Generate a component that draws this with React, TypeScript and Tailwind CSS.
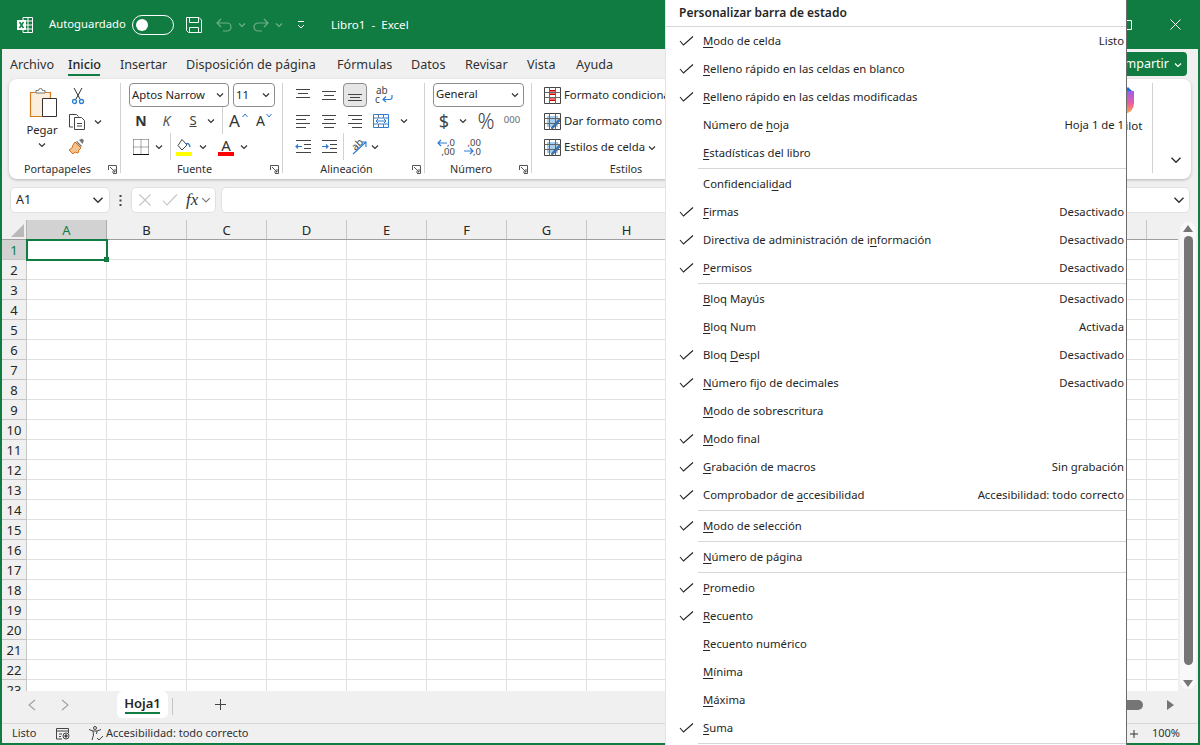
import React from "react";

const Chev = ({ s = 8, c = "#333", w = 1.2 }: { s?: number; c?: string; w?: number }) => (
  <svg width={s} height={s} viewBox="0 0 8 8"><path d="M1 2.5 4 5.5 7 2.5" fill="none" stroke={c} strokeWidth={w} /></svg>
);

const Lines = ({ y, x }: { y: number[]; x: [number, number][] }) => (
  <svg width="16" height="16" viewBox="0 0 16 16">
    {y.map((v, i) => <path key={i} d={`M${x[i][0]} ${v}.5H${x[i][1]}`} stroke="#444" strokeWidth="1" />)}
  </svg>
);

const Launcher = () => (
  <svg width="9" height="9" viewBox="0 0 9 9" fill="none" stroke="#555"><path d="M.5 5V.5H8.5V8.5H5" /><path d="M2 2 7 7M7 4V7H4" /></svg>
);

const Sep = () => <div className="w-px h-[27px] bg-[#d2d2d2]" />;
const Divider = () => <div className="w-px h-[90px] shrink-0 bg-[#d2d2d2]" />;

const GroupFooter = ({ label, launcher = true }: { label: string; launcher?: boolean }) => (
  <div className={launcher ? "h-[20px] shrink-0 flex items-center relative text-[10.8px] text-[#303030] pr-[14px]" : "h-[20px] shrink-0 flex items-center relative text-[10.8px] text-[#303030]"}>
    <span className="flex-1 text-center">{label}</span>
    {launcher && <span className="absolute right-[3px] top-[6px] flex"><Launcher /></span>}
  </div>
);

const Combo = ({ text, className }: { text: string; className: string }) => (
  <div className={"h-[24px] rounded-[4px] border border-[#8c8c8c] bg-white flex items-center justify-between pl-[2px] pr-[4px] text-[#262626] " + className}>
    <span>{text}</span><Chev />
  </div>
);

const PasteIcon = () => (
  <svg width="30" height="32" viewBox="0 0 30 32">
    <path d="M1.5 5.5h20v24h-20z" fill="#fbeedd" stroke="#d57a1e" strokeWidth="1.2" />
    <path d="M7 6V3.5h2.5a2 2 0 0 1 4 0H16V6z" fill="#fff" stroke="#777" />
    <path d="M13.5 11.5h14v18h-14z" fill="#fff" stroke="#333" />
  </svg>
);
const Scissors = () => (
  <svg width="14" height="18" viewBox="0 0 14 18" fill="none" stroke="#333"><path d="M3 1 9 12M11 1 5 12" /><circle cx="3.5" cy="14.5" r="2" stroke="#2b7cd3" strokeWidth="1.3" /><circle cx="10.5" cy="14.5" r="2" stroke="#2b7cd3" strokeWidth="1.3" /></svg>
);
const CopyIcon = () => (
  <svg width="18" height="17" viewBox="0 0 18 17" fill="none" stroke="#444"><path d="M1.5 14V1.5h7l2 2" /><path d="M1.5 14H5" /><path d="M6.5 4.5h7l3 3v9h-10z" fill="#fff" /><path d="M9 10.5h5M9 13h5" /></svg>
);
const Brush = () => (
  <svg width="17" height="17" viewBox="0 0 17 17"><path d="M9 3l5 5-1 1-5-5zM11 2l3-1.5 2 2L14.500 6z" fill="#777" /><path d="M7 4l6 6-2 2-1 3-3-1-2 2-1-1-3-3 3-2 1-3z" fill="#f4c28b" stroke="#d9701f" /></svg>
);
const BorderIcon = () => (
  <svg width="16" height="16" viewBox="0 0 16 16" fill="none" stroke="#555" strokeDasharray="1 1"><path d="M.5.5h15M.5.5v15M15.500.5v15M8 .5v15M.5 8h15" /><path d="M0 15.500h16" stroke="#111" strokeDasharray="none" strokeWidth="1.2" /></svg>
);
const FillIcon = () => (
  <svg width="16" height="18" viewBox="0 0 16 18"><path d="M6 1.500 11 7l-5 5-4-4.500z" fill="#fff" stroke="#444" /><path d="M10 6q3-2 4 3" fill="none" stroke="#2b7cd3" strokeWidth="1.5" /><path d="M0 14h16v4H0z" fill="#ffff00" /></svg>
);
const FontColor = () => (
  <span className="relative w-[16px] h-[18px] flex flex-col items-center justify-between">
    <span className="text-[15px] leading-[14px] text-[#333]">A</span>
    <span className="w-[16px] h-[4px] bg-[#ff0000]" />
  </span>
);
const WrapIcon = () => (
  <span className="relative w-[17px] h-[18px] block text-[10px] leading-[9px] text-[#444]">
    <span className="block pl-[1px]">ab</span>
    <span className="block">c</span>
    <svg className="absolute left-[6px] top-[8px]" width="12" height="9" viewBox="0 0 12 9" fill="none" stroke="#2b7cd3" strokeWidth="1.2"><path d="M11 1v2.500a2 2 0 0 1-2 2H2M5 2.500 2 5.500 5 8" /></svg>
  </span>
);
const MergeIcon = () => (
  <svg width="16" height="16" viewBox="0 0 16 16" fill="none"><path d="M.5 1.500h15v13H.5z" stroke="#2b7cd3" /><path d="M.5 5h15M.5 11h15" stroke="#2b7cd3" /><path d="M5.500 1.500V5M10.500 1.500V5M5.500 11v3.500M10.500 11v3.500" stroke="#777" /><path d="M3 8h10M5 6l-2 2 2 2M11 6l2 2-2 2" stroke="#2b7cd3" /></svg>
);
const Indent = ({ flip = false }: { flip?: boolean }) => (
  <svg width="16" height="14" viewBox="0 0 16 14" fill="none"><path d="M1 .5h15M9 4.500h7M9 8.500h7M1 12.500h15" stroke="#444" /><path d={flip ? "M1 6.500h6M5 4.500 7 6.500 5 8.500" : "M1 6.500h6M3 4.500 1 6.500 3 8.500"} stroke="#2b7cd3" strokeWidth="1.2" /></svg>
);
const Orient = () => (
  <span className="relative w-[18px] h-[18px] block">
    <span className="absolute left-[1px] top-[1px] text-[10px] leading-[10px] text-[#444] rotate-[-45deg]">ab</span>
    <svg className="absolute left-0 top-0" width="18" height="18" viewBox="0 0 18 18" fill="none" stroke="#2b7cd3" strokeWidth="1.1"><path d="M3 16 16 4M11 4h5v5" /></svg>
  </span>
);
const DecDown = ({ flip = false }: { flip?: boolean }) => (
  <span className="relative w-[18px] h-[18px] block text-[9.5px] leading-[9px] text-[#444] text-right">
    <span className="block">{flip ? ",00" : ",0"}</span>
    <span className="block">{flip ? ",0" : ",00"}</span>
    <svg className="absolute left-0" style={{ top: flip ? 9 : 1 }} width="11" height="8" viewBox="0 0 11 8" fill="none" stroke="#2b7cd3" strokeWidth="1.2"><path d={flip ? "M1 4h9M7 1l3 3-3 3" : "M1 4h9M4 1 1 4l3 3"} /></svg>
  </span>
);
const TableIcon = ({ v }: { v: number }) => (
  <svg width="17" height="17" viewBox="0 0 17 17" fill="none">
    <path d="M.5.5h16v16H.5z" stroke="#444" fill="#fff" />
    {v === 0 ? <path d="M5.500 3.500h6v4h-6zM5.500 10.500h6v3h-6z" fill="#f26d6d" stroke="#c00000" /> : <path d="M3 3h11v11H3z" fill="#a7ccec" />}
    <path d="M.5 5.500h16M.5 10.500h16M5.500.5v16M11.500.5v16" stroke="#666" />
    {v !== 0 && <path d="M7 15l8-9 1.500 1.500-8 8.500z" fill="#2b7cd3" stroke="#444" strokeWidth=".6" />}
  </svg>
);

const MENU: (string | null)[][] = [
  ["1", "M_odo de celda", "Listo"],
  ["1", "R_elleno rápido en las celdas en blanco", ""],
  ["1", "R_elleno rápido en las celdas modificadas", ""],
  ["", "Número de h_oja", "Hoja 1 de 1"],
  ["", "E_stadísticas del libro", ""],
  [null],
  ["", "Confidencialid_ad", ""],
  ["1", "F_irmas", "Desactivado"],
  ["1", "Directiva de administración de in_formación", "Desactivado"],
  ["1", "P_ermisos", "Desactivado"],
  [null],
  ["", "B_loq Mayús", "Desactivado"],
  ["", "B_loq Num", "Activada"],
  ["1", "Bloq D_espl", "Desactivado"],
  ["1", "N_úmero fijo de decimales", "Desactivado"],
  ["", "M_odo de sobrescritura", ""],
  ["1", "M_odo final", ""],
  ["1", "G_rabación de macros", "Sin grabación"],
  ["1", "Comprobador de a_ccesibilidad", "Accesibilidad: todo correcto"],
  [null],
  ["1", "M_odo de selección", ""],
  [null],
  ["1", "N_úmero de página", ""],
  [null],
  ["1", "P_romedio", ""],
  ["1", "R_ecuento", ""],
  ["", "R_ecuento numérico", ""],
  ["", "M_ínima", ""],
  ["", "M_áxima", ""],
  ["1", "S_uma", ""],
  [null],
];

const Label = ({ t }: { t: string }) => {
  const i = t.indexOf("_");
  const a = t.slice(0, i - 1);
  const b = t.slice(i - 1, i);
  const c = t.slice(i + 1);
  return <span>{a}<span className="underline underline-offset-2">{b}</span>{c}</span>;
};

const COLS = ["A", "B", "C", "D", "E", "F", "G", "H", "I", "J", "K", "L", "M", "N", "O"];
const ROWS = Array.from({ length: 23 }, (_, i) => i + 1);

export default function App() {
  return (
    <div className="w-[1200px] h-[745px] relative overflow-hidden bg-[#107c41] font-['Noto_Sans',sans-serif] text-[11.3px] text-[#262626] flex flex-col">
      {/* title bar */}
      <div className="h-[49px] shrink-0 flex items-center pl-[17px] text-white">
        <svg width="16" height="16" viewBox="0 0 16 16" fill="none" stroke="#fff"><path d="M6 .5h9.500v15H6z" /><path d="M6 4h9.500M6 8h9.500M6 12h9.500M11 .5v15" /><path d="M0 3h9v10H0z" fill="#fff" stroke="none" /><path d="M2.500 5 6.500 11M6.500 5 2.500 11" stroke="#107c41" strokeWidth="1.400" /></svg>
        <span className="ml-[16px] w-[83px] whitespace-nowrap">Autoguardado</span>
        <div className="w-[42px] h-[20px] rounded-full border border-white flex items-center pl-[3px]"><span className="w-[12px] h-[12px] rounded-full bg-white" /></div>
        <svg className="ml-[12px]" width="16" height="16" viewBox="0 0 16 16" fill="none" stroke="#fff" opacity=".95"><path d="M.5.500h12.500l2.500 2.500v12.500H2.500L.5 13.500z" /><path d="M3.500.5v5h9v-5M3.500 15.500v-5h9v5" /></svg>
        <svg className="ml-[14px]" width="16" height="16" viewBox="0 0 16 16" fill="none" stroke="#6fae8b" strokeWidth="1.200"><path d="M1 6h10a4 4 0 0 1 0 8H7M5 2 1 6l4 4" /></svg>
        <span className="ml-[6px] flex"><Chev c="#6fae8b" /></span>
        <svg className="ml-[7px]" width="16" height="16" viewBox="0 0 16 16" fill="none" stroke="#6fae8b" strokeWidth="1.200"><path d="M15 6H5a4 4 0 0 0 0 8h4M11 2l4 4-4 4" /></svg>
        <span className="ml-[6px] flex"><Chev c="#6fae8b" /></span>
        <svg className="ml-[14px]" width="8" height="8" viewBox="0 0 8 8" fill="none" stroke="#fff"><path d="M1 .5h6" /><path d="M1 4 4 7 7 4" /></svg>
        <span className="ml-[26px] text-[11.6px] whitespace-pre">Libro1  -  Excel</span>
        <div className="flex-1" />
        <svg width="10" height="10" viewBox="0 0 10 10" fill="none" stroke="#fff" className="mr-[38px]"><path d="M.5.5h9v9h-9z" /></svg>
        <svg width="11" height="11" viewBox="0 0 11 11" fill="none" stroke="#fff" className="mr-[19px]"><path d="M.5.5l10 10M10.500.5l-10 10" /></svg>
      </div>

      {/* window body */}
      <div className="flex-1 ml-[2px] mr-[2px] mb-[2px] bg-[#f0f0f0] flex flex-col min-h-0">
        {/* tabs */}
        <div className="h-[30px] shrink-0 flex items-start pt-[7px] pl-[8px] text-[12.6px] text-[#303030] relative">
          <span className="w-[58px]">Archivo</span>
          <span className="w-[52px] relative font-medium text-[#1f1f1f]">Inicio<span className="absolute left-0 top-[18px] w-[32px] h-[2px] bg-[#107c41]" /></span>
          <span className="w-[66px]">Insertar</span>
          <span className="w-[151px]">Disposición de página</span>
          <span className="w-[74px]">Fórmulas</span>
          <span className="w-[54px]">Datos</span>
          <span className="w-[62px]">Revisar</span>
          <span className="w-[49px]">Vista</span>
          <span>Ayuda</span>
          <div className="absolute right-[11px] top-[3px] h-[24px] w-[100px] bg-[#107c41] rounded-[4px] text-white flex items-center justify-end pr-[5px] gap-[5px] pt-[1px]">
            <span className="text-[12.5px]">Compartir</span><Chev c="#fff" />
          </div>
        </div>

        {/* ribbon */}
        <div className="h-[100px] shrink-0 mx-[7px] bg-white rounded-[8px] shadow-[0_1px_3px_rgba(0,0,0,0.25)] flex items-start pt-[4px] overflow-hidden">
          {/* Portapapeles */}
          <div className="w-[111px] shrink-0 flex flex-col">
            <div className="h-[76px] flex">
              <div className="w-[58px] flex flex-col items-center pl-[8px] pt-[4px]">
                <span className="flex ml-[4px]"><PasteIcon /></span>
                <span className="mt-[2px] leading-[18px]">Pegar</span>
                <span className="flex mt-[2px]"><Chev /></span>
              </div>
              <div className="flex flex-col gap-[8px] pl-[1px] pt-[4px]">
                <span className="pl-[3px] flex"><Scissors /></span>
                <span className="flex items-center gap-[8px]"><CopyIcon /><Chev /></span>
                <span className="flex"><Brush /></span>
              </div>
            </div>
            <GroupFooter label="Portapapeles" />
          </div>
          <Divider />
          {/* Fuente */}
          <div className="w-[161px] shrink-0 flex flex-col">
            <div className="h-[76px] flex flex-col pl-[8px]">
              <div className="flex gap-[4px]">
                <Combo text="Aptos Narrow" className="w-[100px]" />
                <Combo text="11" className="w-[42px]" />
              </div>
              <div className="h-[28px] flex items-center">
                <span className="w-[24px] text-center font-bold text-[14px] text-[#333]">N</span>
                <span className="w-[27px] text-center italic text-[14px] text-[#555]">K</span>
                <span className="w-[26px] text-center underline text-[13px] text-[#444]">S</span>
                <span className="w-[16px] flex pl-[1px]"><Chev /></span>
                <Sep />
                <span className="w-[26px] text-center text-[17px] leading-[22px] text-[#333] relative pr-[3px]">A<span className="absolute top-[3px] right-[1px] flex"><svg width="6" height="5" viewBox="0 0 6 5" fill="none" stroke="#2b7cd3"><path d="M.5 4 3 1 5.500 4" /></svg></span></span>
                <span className="w-[26px] text-center text-[14px] leading-[22px] text-[#333] relative pr-[3px]">A<span className="absolute top-[3px] right-[3px] flex"><svg width="6" height="5" viewBox="0 0 6 5" fill="none" stroke="#2b7cd3"><path d="M.5 1 3 4 5.500 1" /></svg></span></span>
              </div>
              <div className="h-[25px] flex items-center">
                <span className="w-[23px] flex justify-center"><BorderIcon /></span>
                <span className="w-[14px] flex pl-[3px]"><Chev /></span>
                <span className="w-[4px]" /><Sep />
                <span className="w-[26px] flex justify-center"><FillIcon /></span>
                <span className="w-[14px] flex pl-[2px]"><Chev /></span>
                <span className="w-[23px] flex justify-end"><FontColor /></span>
                <span className="w-[14px] flex justify-end"><Chev /></span>
              </div>
            </div>
            <GroupFooter label="Fuente" />
          </div>
          <Divider />
          {/* Alineación */}
          <div className="w-[141px] shrink-0 flex flex-col">
            <div className="h-[76px] flex flex-col pl-[12px]">
              <div className="h-[24px] flex items-center">
                <span className="w-[26px] flex"><Lines y={[2, 6, 10]} x={[[1, 15], [3, 13], [1, 15]]} /></span>
                <span className="w-[22px] flex"><Lines y={[4, 8, 12]} x={[[1, 15], [3, 13], [1, 15]]} /></span>
                <span className="w-[24px] h-[24px] rounded-[4px] border border-[#8c8c8c] bg-[#e6e6e6] flex items-center justify-center"><Lines y={[7, 10, 13]} x={[[1, 15], [3, 13], [1, 15]]} /></span>
                <span className="ml-[8px] flex"><WrapIcon /></span>
              </div>
              <div className="h-[28px] flex items-center">
                <span className="w-[26px] flex"><Lines y={[2, 6, 10, 14]} x={[[1, 15], [1, 11], [1, 15], [1, 11]]} /></span>
                <span className="w-[26px] flex"><Lines y={[2, 6, 10, 14]} x={[[1, 15], [3, 13], [1, 15], [3, 13]]} /></span>
                <span className="w-[26px] flex"><Lines y={[2, 6, 10, 14]} x={[[1, 15], [5, 15], [1, 15], [5, 15]]} /></span>
                <span className="w-[27px] flex"><MergeIcon /></span>
                <span className="flex"><Chev /></span>
              </div>
              <div className="h-[25px] flex items-center">
                <span className="w-[26px] flex"><Indent /></span>
                <span className="w-[22px] flex"><Indent flip /></span>
                <Sep />
                <span className="w-[6px]" />
                <span className="w-[21px] flex"><Orient /></span>
                <span className="flex"><Chev /></span>
              </div>
            </div>
            <GroupFooter label="Alineación" />
          </div>
          <Divider />
          {/* Número */}
          <div className="w-[106px] shrink-0 flex flex-col">
            <div className="h-[76px] flex flex-col pl-[8px]">
              <Combo text="General" className="w-[91px]" />
              <div className="h-[28px] flex items-center text-[#444]">
                <span className="w-[22px] text-center text-[18px] leading-[20px]">$</span>
                <span className="w-[16px] flex justify-center"><Chev /></span>
                <span className="w-[30px] text-center text-[21px] font-light leading-[20px]">%</span>
                <span className="w-[22px] text-center text-[9.5px] text-[#666]">000</span>
              </div>
              <div className="h-[25px] flex items-center gap-[8px] pl-[4px]">
                <DecDown /><DecDown flip />
              </div>
            </div>
            <GroupFooter label="Número" />
          </div>
          <Divider />
          {/* Estilos */}
          <div className="w-[188px] shrink-0 flex flex-col">
            <div className="h-[76px] flex flex-col pt-[4px] pl-[12px] gap-[9px] whitespace-nowrap">
              <div className="h-[17px] flex items-center gap-[3px]"><TableIcon v={0} /><span>Formato condicional</span></div>
              <div className="h-[17px] flex items-center gap-[3px]"><TableIcon v={1} /><span>Dar formato como tabla</span></div>
              <div className="h-[17px] flex items-center gap-[3px]"><TableIcon v={2} /><span>Estilos de celda</span><Chev /></div>
            </div>
            <GroupFooter label="Estilos" launcher={false} />
          </div>
          <div className="flex-1" />
          {/* Copilot */}
          <div className="w-[56px] shrink-0 flex flex-col items-center pt-[4px] pr-[2px]">
            <svg width="26" height="28" viewBox="0 0 26 28">
              <defs><linearGradient id="cp" x1="0" y1="0" x2="0" y2="1"><stop offset="0" stopColor="#9a5cf0" /><stop offset=".55" stopColor="#e8609c" /><stop offset="1" stopColor="#fbb040" /></linearGradient></defs>
              <path d="M2 4h22v12q0 10-11 11Q2 26 2 16z" fill="url(#cp)" />
              <path d="M14 4 18 0l4 4z" fill="#1c6fd6" />
            </svg>
            <span className="text-[11.6px] mt-[2px]">Copilot</span>
          </div>
          <Divider />
          <div className="w-[38px] h-[90px] shrink-0 flex items-end justify-end pb-[7px] pr-[9px]"><Chev s={12} w={1} /></div>
        </div>

        {/* formula bar */}
        <div className="h-[26px] shrink-0 mt-[8px] mx-[8px] flex items-center">
          <div className="w-[100px] h-[26px] bg-white rounded-[5px] border border-[#e0e0e0] flex items-center justify-between pl-[5px] pr-[5px] text-[12.5px]"><span>A1</span><Chev s={12} w={1} /></div>
          <div className="w-[21px] flex justify-center">
            <svg width="3" height="11" viewBox="0 0 3 11" fill="#444"><rect x="0.500" y="0" width="2" height="2" /><rect x="0.500" y="4.500" width="2" height="2" /><rect x="0.500" y="9" width="2" height="2" /></svg>
          </div>
          <div className="w-[85px] h-[26px] bg-white rounded-[5px] border border-[#e0e0e0] flex items-center pl-[7px]">
            <svg width="12" height="12" viewBox="0 0 12 12" fill="none" stroke="#c4c4c4" strokeWidth="1.100"><path d="M.5.5l11 11M11.500.5l-11 11" /></svg>
            <svg className="ml-[11px]" width="16" height="12" viewBox="0 0 16 12" fill="none" stroke="#c4c4c4" strokeWidth="1.100"><path d="M1 6.500 5 11 15 .5" /></svg>
            <span className="ml-[8px] font-['Liberation_Serif',serif] italic text-[17px] leading-[20px] text-[#333]">fx</span>
            <span className="ml-[3px] flex"><Chev s={10} c="#777" w={.9} /></span>
          </div>
          <div className="w-[5px]" />
          <div className="flex-1 h-[26px] bg-white rounded-[5px] border border-[#e0e0e0] flex items-center justify-end pr-[4px]"><Chev s={12} w={1} /></div>
        </div>

        {/* sheet area */}
        <div className="flex-1 min-h-0 mt-[7px] flex">
          <div className="w-[1176px] shrink-0 flex flex-col relative overflow-hidden bg-white">
            <div className="h-[20px] shrink-0 flex bg-[#f0f0f0] border-b border-[#9e9e9e]">
              <div className="w-[25px] shrink-0 border-r border-[#b5b5b5] flex items-end justify-end pr-[2px] pb-[2px]">
                <svg width="13" height="13" viewBox="0 0 13 13"><path d="M13 0v13H0z" fill="#b9b9b9" /></svg>
              </div>
              {COLS.map((c, i) => (
                <div key={c} className={i === 0
                  ? "w-[80px] shrink-0 bg-[#d2d2d2] border-r border-[#ababab] text-center text-[13px] leading-[20px] text-[#107c41]"
                  : "w-[80px] shrink-0 border-r border-[#c6c6c6] text-center text-[13px] leading-[20px] text-[#262626]"}>{c}</div>
              ))}
            </div>
            {ROWS.map((r) => (
              <div key={r} className="h-[20px] shrink-0 flex">
                <div className={r === 1
                  ? "w-[25px] shrink-0 bg-[#d2d2d2] border-r border-b border-[#c6c6c6] text-center text-[13px] leading-[21px] text-[#107c41]"
                  : "w-[25px] shrink-0 bg-[#f0f0f0] border-r border-b border-[#c6c6c6] text-center text-[13px] leading-[21px]"}>{r}</div>
                {COLS.map((c) => <div key={c} className="w-[80px] shrink-0 border-r border-b border-[#e1e1e1]" />)}
              </div>
            ))}
            <div className="absolute left-[24px] top-[19px] w-[82px] h-[22px] border-2 border-[#107c41]" />
            <div className="absolute left-[102px] top-[37px] w-[5px] h-[5px] bg-[#107c41]" />
          </div>
          <div className="flex-1 flex flex-col items-center pt-[2px] pb-[2px] relative my-[2px] mx-[2px] rounded-full bg-[#f8f8f8]">
            <svg width="10" height="7" viewBox="0 0 10 7" className="mt-[1px]"><path d="M5 0 10 7H0z" fill="#757575" /></svg>
            <div className="w-[9px] flex-1 mt-[4px] mb-[15px] rounded-full bg-[#757575]" />
            <svg width="10" height="7" viewBox="0 0 10 7"><path d="M5 7 10 0H0z" fill="#757575" /></svg>
          </div>
        </div>

        {/* sheet tabs */}
        <div className="h-[32px] shrink-0 flex items-start bg-[#f0f0f0] relative">
          <div className="w-[115px] h-[27px] flex items-center">
            <svg className="ml-[26px]" width="8" height="12" viewBox="0 0 8 12" fill="none" stroke="#a0a0a0" strokeWidth="1.100"><path d="M7 1 1 6l6 5" /></svg>
            <svg className="ml-[25px]" width="8" height="12" viewBox="0 0 8 12" fill="none" stroke="#a0a0a0" strokeWidth="1.100"><path d="M1 1l6 5-6 5" /></svg>
          </div>
          <div className="w-[51px] h-[27px] bg-white rounded-b-[5px] rounded-t-[6px] flex flex-col items-center pt-[3px] relative">
            <span className="text-[13px] leading-[18px] font-semibold text-[#262626]">Hoja1</span>
            <span className="w-[35px] h-[2px] bg-[#107c41]" />
          </div>
          <div className="w-px h-[17px] ml-[4px] mt-[7px] bg-[#c6c6c6]" />
          <svg className="ml-[42px] mt-[8px]" width="11" height="11" viewBox="0 0 11 11" fill="none" stroke="#444"><path d="M5.500 0v11M0 5.500h11" /></svg>
          <div className="flex-1" />
          <div className="w-[18px] h-[10px] rounded-r-full bg-[#757575] mt-[9px] mr-[24px]" />
          <svg width="7" height="10" viewBox="0 0 7 10" className="mt-[9px] mr-[24px]"><path d="M0 0 7 5 0 10z" fill="#757575" /></svg>
        </div>

        {/* status bar */}
        <div className="h-[20px] shrink-0 border-t border-[#d6d6d6] flex items-center pl-[10px] pr-[18px] text-[11px] text-[#333]">
          <span className="w-[44px]">Listo</span>
          <svg width="14" height="13" viewBox="0 0 14 13" fill="none" stroke="#444"><path d="M.5 1.500h12V6M.5 1.500V12H6M.5 4h12M3 7h3M3 9.500h2" /><circle cx="10" cy="9" r="3" /><circle cx="10" cy="9" r="1.200" fill="#444" /></svg>
          <svg className="ml-[18px]" width="16" height="15" viewBox="0 0 16 15" fill="none" stroke="#444"><circle cx="7" cy="2" r="1.500" /><path d="M1 3.500l4 1.500h4l4-1.500M5 5l.5 4-1.500 5M9 5l-.5 3M9 12l2 2 4-4" /></svg>
          <span className="ml-[2px]">Accesibilidad: todo correcto</span>
          <div className="flex-1" />
          <svg className="mr-[14px]" width="8" height="8" viewBox="0 0 8 8" fill="none" stroke="#333"><path d="M4 0v8M0 4h8" /></svg>
          <span>100%</span>
        </div>
      </div>

      {/* context menu */}
      <div className="absolute left-[665px] top-0 w-[462px] h-[745px] bg-white border-r border-[#6b6b6b] border-l border-l-[#e4e4e4] flex flex-col">
        <div className="h-[26px] shrink-0 flex items-center pl-[13px] text-[12px] font-semibold text-[#262626]">Personalizar barra de estado</div>
        <div className="h-px shrink-0 bg-[#d6d6d6]" />
        {MENU.map((m, i) =>
          m[0] === null ? (
            <div key={i} className="h-[3px] shrink-0 flex items-center pl-[32px]"><div className="h-px flex-1 bg-[#d6d6d6]" /></div>
          ) : (
            <div key={i} className="h-[28px] shrink-0 flex items-center pr-[2px]">
              <span className="w-[37px] flex pl-[13px]">
                {m[0] === "1" && <svg width="15" height="10" viewBox="0 0 15 10" fill="none" stroke="#222" strokeWidth="1.1"><path d="M1 5l3.500 4L14 .5" /></svg>}
              </span>
              <span className="flex-1"><Label t={m[1] as string} /></span>
              <span>{m[2]}</span>
            </div>
          )
        )}
      </div>
    </div>
  );
}
